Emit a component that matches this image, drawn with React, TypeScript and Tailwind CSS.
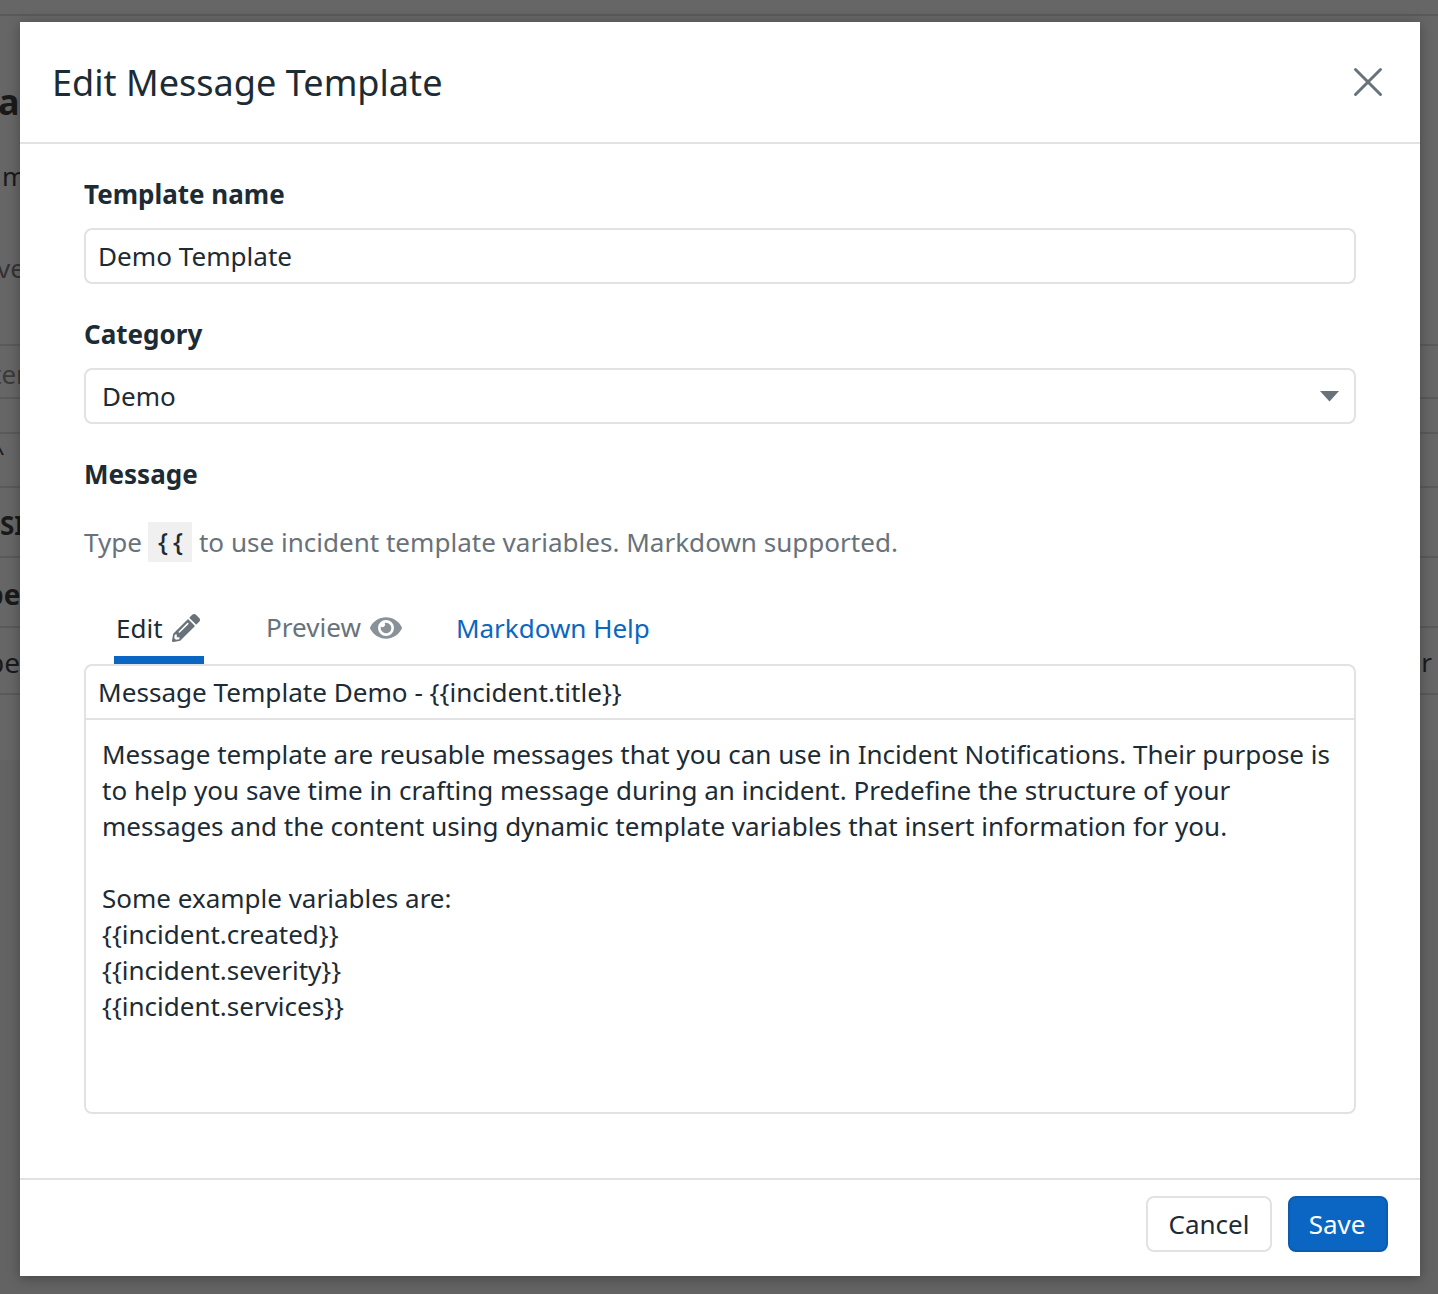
import type { ReactNode } from "react";
import { FaEye, FaPencilAlt } from "react-icons/fa";

const sans = "font-['Noto_Sans','Liberation_Sans',sans-serif]";

function Field({ label, children }: { label: string; children: ReactNode }) {
  return (
    <div>
      <div className="text-[26px] leading-[36px] font-bold text-[#1c2b34]">{label}</div>
      {children}
    </div>
  );
}

export default function App() {
  return (
    <div className={`relative h-[1294px] w-[1438px] overflow-hidden bg-[#636363] ${sans}`}>
      <Backdrop />

      <div className="absolute left-[20px] top-[22px] flex h-[1254px] w-[1400px] flex-col bg-white shadow-[0_2px_12px_rgba(0,0,0,0.3)]">
        <div className="flex h-[122px] shrink-0 items-center justify-between border-b-2 border-[#e2e2e6] pl-[32px] pr-[36px]">
          <h1 className="text-[36.1px] leading-[48px] text-[#1c2b34]">Edit Message Template</h1>
          <svg width="32" height="32" viewBox="0 0 32 32" fill="none" stroke="#68727a" strokeWidth="3" strokeLinecap="round">
            <path d="M3.5 3.5 L28.5 28.5 M28.5 3.5 L3.5 28.5" />
          </svg>
        </div>

        <div className="flex-1 px-[64px] pt-[32px]">
          <Field label="Template name">
            <div className="mt-[16px] flex h-[56px] items-center rounded-[8px] border-2 border-[#e2e2e2] px-[12px] pt-[2px] text-[26.1px] text-[#1c2b34]">
              Demo Template
            </div>
          </Field>

          <div className="mt-[32px]">
            <Field label="Category">
              <div className="mt-[16px] flex h-[56px] items-center justify-between rounded-[8px] border-2 border-[#e2e2e2] pl-[16px] pr-[15px] text-[26px] text-[#1c2b34]">
                Demo
                <svg width="19" height="11" viewBox="0 0 19 11" fill="#68727a">
                  <path d="M0 0 H19 L9.5 10.5 Z" />
                </svg>
              </div>
            </Field>
          </div>

          <div className="mt-[32px]">
            <Field label="Message">
              <p className="mt-[30px] flex h-[41px] items-center text-[26.05px] text-[#68727a]">
                Type
                <code className={`ml-[6px] mr-[7px] flex h-[40px] w-[44px] items-center justify-center self-start bg-[#f0f0f0] pl-[6px] font-medium tracking-[5px] text-[#1c2b34] ${sans}`}>
                  {"{{"}
                </code>
                to use incident template variables. Markdown supported.
              </p>
            </Field>
          </div>

          <div className="mt-[29px] flex h-[72px] items-stretch text-[26px]">
            <div className="ml-[30px] flex w-[90px] items-center border-b-[8px] border-[#0a66c2] pl-[2px] pt-[8px] text-[#1c2b34]">
              Edit
              <FaPencilAlt className="ml-[9px] h-[28px] w-[28px] text-[#68727a]" />
            </div>
            <div className="ml-[62px] flex items-center border-b-[8px] border-transparent pt-[8px] text-[26.1px] text-[#68727a]">
              Preview
              <FaEye className="ml-[9px] h-[32px] w-[32px] text-[#8a9299]" />
            </div>
            <div className="ml-[54px] flex items-center border-b-[8px] border-transparent pt-[8px] text-[#0a66c2]">Markdown Help</div>
          </div>

          <div className="h-[450px] rounded-[8px] border-2 border-[#e2e2e2] text-[26px] text-[#1c2b34]">
            <div className="flex h-[54px] items-center border-b-2 border-[#e2e2e2] px-[12px] pt-[2px] text-[26.1px]">
              {"Message Template Demo - {{incident.title}}"}
            </div>
            <div className="whitespace-pre-line px-[16px] pt-[16px] leading-[36px]">
              {`Message template are reusable messages that you can use in Incident Notifications. Their purpose is
to help you save time in crafting message during an incident. Predefine the structure of your
messages and the content using dynamic template variables that insert information for you.

Some example variables are:
{{incident.created}}
{{incident.severity}}
{{incident.services}}`}
            </div>
          </div>
        </div>

        <div className="flex h-[98px] shrink-0 items-start justify-end gap-[16px] border-t-2 border-[#e2e2e6] pr-[32px] pt-[16px] text-[26px]">
          <button className="h-[56px] w-[126px] rounded-[8px] border-2 border-[#e2e2e2] bg-white text-[#1c2b34]">Cancel</button>
          <button className="h-[56px] w-[100px] rounded-[8px] border-2 border-[#0b5cad] bg-[#0a66c2] pr-[2px] text-white">Save</button>
        </div>
      </div>
    </div>
  );
}

// page behind the modal, only its edges show
function Backdrop() {
  return (
    <div className="bg-[#666666] text-[#1a1a1a]">
      <div className="h-[16px] border-b-2 border-[#5a5a5a]" />
      <div className="flex h-[328px] flex-col">
        <div className="mt-[64px] h-[44px] text-[36px] leading-[44px] font-bold">
          <span className="ml-[-2px]">a</span>
        </div>
        <div className="ml-[2px] mt-[34px] text-[26px] leading-[36px]">m</div>
        <div className="ml-[-3px] mt-[56px] text-[26px] leading-[36px] text-[#333]">ve</div>
      </div>
      <div className="h-[55px] border-y-2 border-[#5a5a5a] text-[26px] leading-[56px] text-[#3a3a3a]">
        <span className="ml-[-8px]">ter</span>
      </div>
      <div className="h-[33px]" />
      <div className="h-[56px] border-y-2 border-[#5a5a5a] text-[26px] leading-[36px]">
        <span className="ml-[-10px]">^</span>
      </div>
      <div className="h-[70px] border-b-2 border-[#5a5a5a] text-[26px] font-bold leading-[74px]">SI</div>
      <div className="h-[70px] border-b-2 border-[#5a5a5a] text-[28px] font-bold leading-[72px]">
        <span className="ml-[-14px]">pe</span>
      </div>
      <div className="flex h-[67px] justify-between border-b-2 border-[#5a5a5a] text-[28px] leading-[68px]">
        <span className="ml-[-13px]">pe</span>
        <span className="mr-[6px] text-[26px]">r</span>
      </div>
      <div className="h-[65px]" />
    </div>
  );
}
